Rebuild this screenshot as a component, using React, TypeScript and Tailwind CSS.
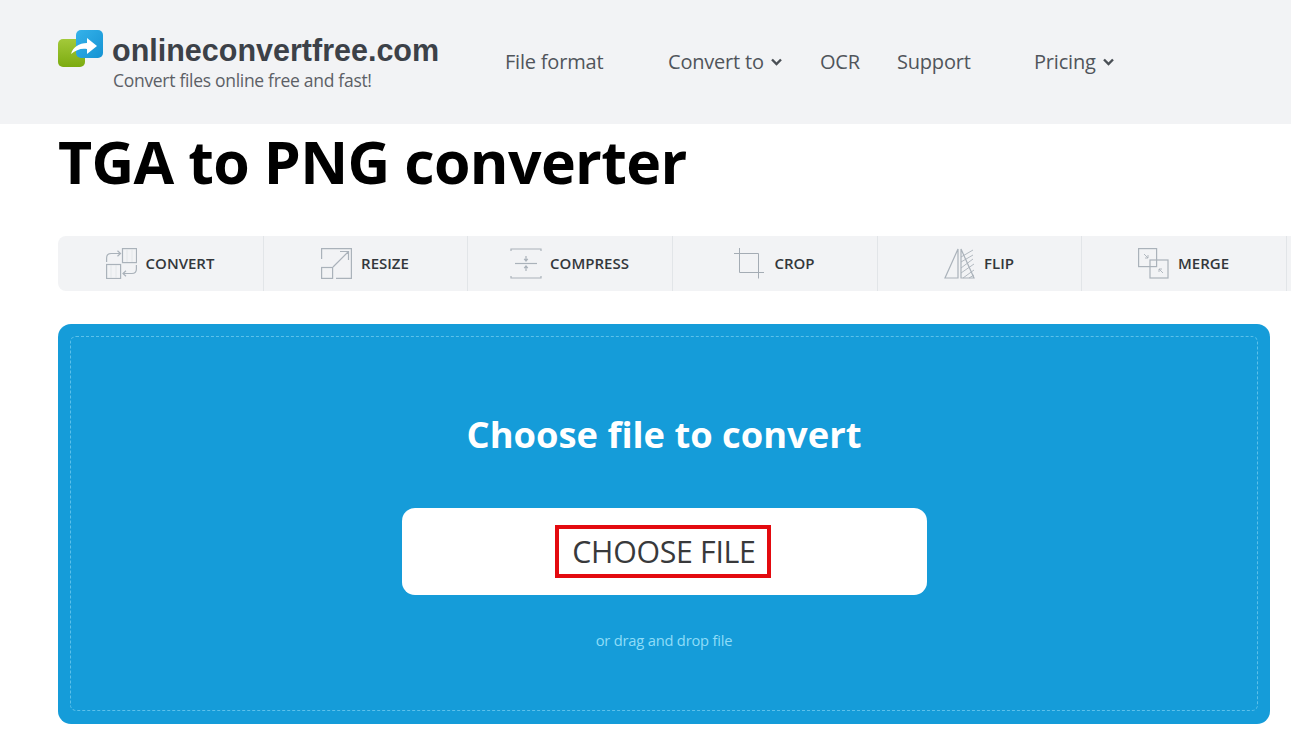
import React from "react";

const stroke = "#aab2ba";

const ConvertIcon = () => (
  <svg width="31" height="31" viewBox="0 0 31 31" fill="none" stroke={stroke} strokeWidth="1.200">
    <rect x="16.500" y="0.600" width="14" height="14" />
    <rect x="0.600" y="16.500" width="14" height="14" />
    <path d="M11.500 2.800l3 2.700-3 2.700" />
    <path d="M0.600 14V10q0-4.500 4.500-4.500h9" />
    <path d="M30.400 17v4q0 4.500-4.500 4.500h-8M20 22.800l-3 2.700 3 2.700" />
    <path d="M21 1v13M26 1v13M5 17v13M10 17v13" stroke="#dfe3e6" strokeWidth="0.800" />
  </svg>
);
const ResizeIcon = () => (
  <svg width="31" height="31" viewBox="0 0 31 31" fill="none" stroke={stroke} strokeWidth="1.200">
    <path d="M0.600 11V0.600h29.800v29.800H15" />
    <rect x="0.600" y="19.500" width="11" height="10.900" />
    <path d="M12 19L27 4M19 3.500h8.500V12" />
  </svg>
);
const CompressIcon = () => (
  <svg width="32" height="31" viewBox="0 0 32 31" fill="none" stroke={stroke} strokeWidth="1.200">
    <path d="M1 3V1h30v2M1 28v2h30v-2" />
    <path d="M5 15.500h22" />
    <path d="M16 8v5M14.200 10.800l1.800 2.200 1.800-2.200M16 23v-5M14.200 20.200l1.800-2.200 1.800 2.200" />
  </svg>
);
const CropIcon = () => (
  <svg width="30" height="31" viewBox="0 0 30 31" fill="none" stroke="#a4acb4" strokeWidth="1">
    <path d="M0 5.500h24.500V30.500" />
    <path d="M5.500 0v24.500H30" />
  </svg>
);
const FlipIcon = () => (
  <svg width="31" height="31" viewBox="0 0 31 31" fill="none" stroke={stroke} strokeWidth="1.200">
    <path d="M14 1v29H1z" />
    <path d="M17 1v29h13z" />
    <path d="M17 9L29 2M17 14l12-7M17 20l12-9M17 25l13-9M19 30l11-8M25 30l5-3" strokeWidth="0.900" />
  </svg>
);
const MergeIcon = () => (
  <svg width="31" height="31" viewBox="0 0 31 31" fill="none" stroke={stroke} strokeWidth="1.200">
    <rect x="0.600" y="0.600" width="18" height="18" />
    <rect x="12" y="12" width="18" height="18" />
    <path d="M6 6l4 4M10 7v3H7M25 25l-4-4M21 24v-3h3" strokeWidth="0.900" />
  </svg>
);

const Chevron = () => (
  <svg width="11" height="8" viewBox="0 0 11 8" fill="none" stroke="#4a4f55" strokeWidth="2.400">
    <path d="M1 1.500l4.500 4.500 4.500-4.500" />
  </svg>
);

const Logo = () => (
  <svg width="46" height="38" viewBox="0 0 46 38">
    <defs>
      <linearGradient id="g" x1="0" y1="0" x2="0" y2="1">
        <stop offset="0" stopColor="#a3c93a" />
        <stop offset="1" stopColor="#7cab10" />
      </linearGradient>
      <linearGradient id="b" x1="0" y1="0" x2="1" y2="1">
        <stop offset="0" stopColor="#35b2ea" />
        <stop offset="1" stopColor="#1593d3" />
      </linearGradient>
    </defs>
    <rect x="0" y="9" width="27" height="28" rx="5" fill="url(#g)" />
    <rect x="18" y="0" width="27" height="28" rx="5" fill="url(#b)" />
    <path d="M13 24c2-7 8-11 16-11V8l10 8-10 8v-5c-6-1-11 1-16 5z" fill="#fff" />
  </svg>
);

const tabs = [
  { label: "CONVERT", Icon: ConvertIcon, w: "w-[206px]", gap: "gap-[9px]" },
  { label: "RESIZE", Icon: ResizeIcon, w: "w-[204px]", gap: "gap-[9px]" },
  { label: "COMPRESS", Icon: CompressIcon, w: "w-[205px]", gap: "gap-[8px]" },
  { label: "CROP", Icon: CropIcon, w: "w-[205px]", gap: "gap-[10px]" },
  { label: "FLIP", Icon: FlipIcon, w: "w-[204px]", gap: "gap-[9px]" },
  { label: "MERGE", Icon: MergeIcon, w: "w-[205px]", gap: "gap-[9px]" },
];

export default function App() {
  return (
    <div className="h-[743px] w-[1291px] overflow-hidden bg-white font-['Open_Sans',sans-serif]">
      <header className="flex h-[124px] items-start bg-[#f2f3f5] pl-[58px]">
        <div className="w-[447px] pt-[30px]">
          <div className="flex h-[38px] items-center gap-[8px]">
            <Logo />
            <span className="pt-[1px] font-['Liberation_Sans',sans-serif] text-[30.500px] leading-[36px] font-bold text-[#3c4148]">
              onlineconvertfree.com
            </span>
          </div>
          <div className="pl-[55px] text-[17.500px] leading-[24px] tracking-[-0.3px] text-[#5c6066]">
            Convert files online free and fast!
          </div>
        </div>
        <nav className="flex items-center pt-[49px] text-[20px] leading-[26px] tracking-[-0.2px] text-[#50555b]">
          <span className="w-[163px]">File format</span>
          <span className="flex w-[152px] items-center gap-[7px]">
            Convert to <Chevron />
          </span>
          <span className="w-[77px]">OCR</span>
          <span className="w-[137px]">Support</span>
          <span className="flex items-center gap-[7px]">
            Pricing <Chevron />
          </span>
        </nav>
      </header>

      <h1 className="h-[112px] pl-[58px] font-['Open_Sans',sans-serif] text-[59px] leading-[74px] font-bold tracking-[-0.650px] text-black">
        TGA to PNG converter
      </h1>

      <div className="ml-[58px] flex h-[55px] w-[1240px] rounded-l-[8px] bg-[#f2f3f5]">
        {tabs.map(({ label, Icon, w, gap }) => (
          <div
            key={label}
            className={`flex ${w} ${gap} shrink-0 items-center justify-center border-r border-[#e2e5e8] pr-[1px] text-[15px] font-semibold text-[#33373b]`}
          >
            <Icon />
            <span>{label}</span>
          </div>
        ))}
      </div>

      <main className="mt-[33px] ml-[58px] h-[400px] w-[1212px] rounded-[13px] bg-[#159cd9] p-[12px]">
        <div className="flex h-[375px] flex-col items-center rounded-[6px] border border-dashed border-[#5cc0ea]">
          <h2 className="mt-[70px] text-[36.300px] leading-[54px] font-bold text-white">Choose file to convert</h2>
          <div className="mt-[47px] flex h-[87px] w-[525px] items-center justify-center rounded-[13px] bg-white">
            <div className="mr-[3px] flex h-[53px] w-[216px] items-center justify-center border-[4px] border-[#e30a0f] pl-[3px] text-[30.300px] tracking-[-0.3px] text-[#38393b]">
              CHOOSE FILE
            </div>
          </div>
          <p className="mt-[34px] text-[14.700px] leading-[22px] tracking-[-0.2px] text-[#8fdcf8]">or drag and drop file</p>
        </div>
      </main>
    </div>
  );
}
